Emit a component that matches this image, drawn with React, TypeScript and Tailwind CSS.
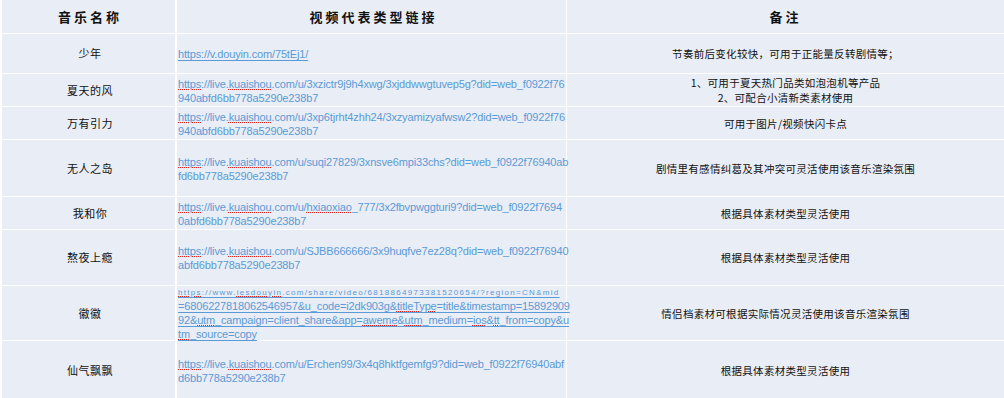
import React from "react";

type Row = {
  name: string;
  h: string;
  links: string[];
  underline?: boolean;
  small?: boolean;
  notes: string[];
};

const rows: Row[] = [
  {
    name: "少年",
    h: "h-[40px]",
    links: ["https://v.douyin.com/75tEj1/"],
    underline: true,
    notes: ["节奏前后变化较快，可用于正能量反转剧情等；"],
  },
  {
    name: "夏天的风",
    h: "h-[33px]",
    links: [
      "{https}://live.{kuaishou}.com/u/3xzictr9j9h4xwg/3xjddwwgtuvep5g?did=web_f0922f76",
      "940abfd6bb778a5290e238b7",
    ],
    notes: ["1、可用于夏天热门品类如泡泡机等产品", "2、可配合小清新类素材使用"],
  },
  {
    name: "万有引力",
    h: "h-[33px]",
    links: [
      "{https}://live.{kuaishou}.com/u/3xp6tjrht4zhh24/3xzyamizyafwsw2?did=web_f0922f76",
      "940abfd6bb778a5290e238b7",
    ],
    notes: ["可用于图片/视频快闪卡点"],
  },
  {
    name: "无人之岛",
    h: "h-[57px]",
    links: [
      "{https}://live.{kuaishou}.com/u/suqi27829/3xnsve6mpi33chs?did=web_f0922f76940ab",
      "fd6bb778a5290e238b7",
    ],
    notes: ["剧情里有感情纠葛及其冲突可灵活使用该音乐渲染氛围"],
  },
  {
    name: "我和你",
    h: "h-[33px]",
    links: [
      "{https}://live.{kuaishou}.com/u/{hxiaoxiao}_777/3x2fbvpwggturi9?did=web_f0922f7694",
      "0abfd6bb778a5290e238b7",
    ],
    notes: ["根据具体素材类型灵活使用"],
  },
  {
    name: "熬夜上瘾",
    h: "h-[56px]",
    links: [
      "{https}://live.{kuaishou}.com/u/SJBB666666/3x9huqfve7ez28q?did=web_f0922f76940",
      "abfd6bb778a5290e238b7",
    ],
    notes: ["根据具体素材类型灵活使用"],
  },
  {
    name: "徽徽",
    h: "h-[55px]",
    underline: true,
    small: true,
    links: [
      "{https}://www.{iesdouyin}.com/share/video/6818864973381520654/?region=CN&mid",
      "=6806227818062546957&u_code=i2dk903g&{titleType}=title&timestamp=15892909",
      "92&{utm}_campaign=client_share&app={aweme}&{utm}_medium={ios}&{tt}_from=copy&u",
      "{tm}_source=copy",
    ],
    notes: ["情侣档素材可根据实际情况灵活使用该音乐渲染氛围"],
  },
  {
    name: "仙气飘飘",
    h: "h-[60px]",
    links: [
      "{https}://live.{kuaishou}.com/u/Erchen99/3x4q8hktfgemfg9?did=web_f0922f76940abf",
      "d6bb778a5290e238b7",
    ],
    notes: ["根据具体素材类型灵活使用"],
  },
];

const cjk = "font-['Noto_Sans_CJK_SC',sans-serif]";
const latin = "font-['Liberation_Sans',sans-serif]";

function LinkLine({ text, underline, small }: { text: string; underline?: boolean; small?: boolean }) {
  const parts = text.split(/(\{[^}]+\})/).filter(Boolean);
  return (
    <span
      className={
        "block whitespace-nowrap " +
        (small
          ? "text-[8px] tracking-[1.3px] leading-[13px] "
          : "text-[11px] tracking-[-0.15px] leading-[14px] ") +
        (underline ? "underline decoration-[#5b9bd5] underline-offset-[2px]" : "")
      }
    >
      {parts.map((p, i) =>
        p.startsWith("{") ? (
          <span key={i} className="underline decoration-dotted decoration-[#e0201c] decoration-1 underline-offset-[1px]">
            {p.slice(1, -1)}
          </span>
        ) : (
          <span key={i}>{p}</span>
        )
      )}
    </span>
  );
}

export default function App() {
  return (
    <div className="w-[1004px] h-[398px] overflow-hidden bg-white pl-[2px]">
      <div className="flex flex-col bg-[#e9edf5] text-[#111]">
        <div className="flex h-[34px] border-b border-white">
          <div className={`w-[175px] border-r-2 border-white flex items-center justify-center pl-[3px] ${cjk} font-bold text-[13px] tracking-[3px]`}>
            音乐名称
          </div>
          <div className={`w-[390px] border-r border-white flex items-center justify-center pl-[4px] ${cjk} font-bold text-[13px] tracking-[3px]`}>
            视频代表类型链接
          </div>
          <div className={`flex-1 flex items-center justify-center ${cjk} font-bold text-[13px] tracking-[3px]`}>
            备注
          </div>
        </div>
        {rows.map((r) => (
          <div key={r.name} className={`flex ${r.h} border-b border-white`}>
            <div className={`w-[175px] border-r-2 border-white flex items-center justify-center pl-[3px] ${cjk} text-[11px] tracking-[0.5px]`}>
              {r.name}
            </div>
            <div className={`w-[390px] border-r border-white flex flex-col justify-center pl-[1px] pt-[1px] ${latin} text-[#5b9bd5]`}>
              {r.links.map((l, i) => (
                <LinkLine key={i} text={l} underline={r.underline} small={r.small && i === 0} />
              ))}
            </div>
            <div className={`flex-1 flex flex-col items-center justify-center ${cjk} text-[10.5px] leading-[15px] tracking-[0.3px]`}>
              {r.notes.map((n, i) => (
                <span key={i}>{n}</span>
              ))}
            </div>
          </div>
        ))}
      </div>
    </div>
  );
}
